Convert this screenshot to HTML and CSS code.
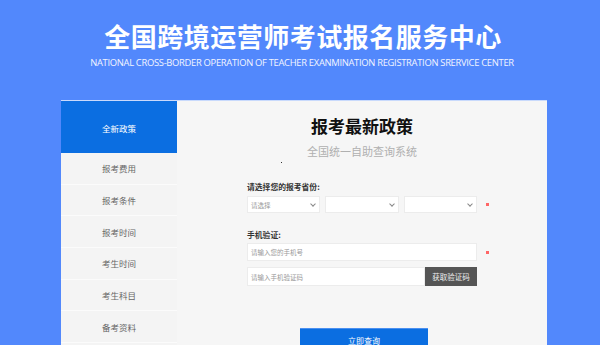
FILE: index.html
```html
<!DOCTYPE html>
<html lang="zh-CN">
<head>
<meta charset="utf-8">
<title>全国跨境运营师考试报名服务中心</title>
<link rel="stylesheet" href="styles.css">
</head>
<body>
<header class="header">
  <h1 class="title">全国跨境运营师考试报名服务中心</h1>
  <p class="subtitle">NATIONAL CROSS-BORDER OPERATION OF TEACHER EXANMINATION REGISTRATION SRERVICE CENTER</p>
</header>
<div class="panel">
  <nav class="side">
    <div class="side-item active">全新政策</div>
    <div class="side-item">报考费用</div>
    <div class="side-item">报考条件</div>
    <div class="side-item">报考时间</div>
    <div class="side-item">考生时间</div>
    <div class="side-item">考生科目</div>
    <div class="side-item">备考资料</div>
  </nav>
  <main class="main">
    <h2 class="heading">报考最新政策</h2>
    <p class="sub">全国统一自助查询系统</p>
    <div class="dot-row"><span class="dot"></span></div>
    <form class="form">
      <div class="label">请选择您的报考省份:</div>
      <div class="row">
        <div class="select"><span class="ph">请选择</span><span class="chev"></span></div>
        <div class="select"><span class="ph"></span><span class="chev"></span></div>
        <div class="select"><span class="ph"></span><span class="chev"></span></div>
        <span class="req"></span>
      </div>
      <div class="label label2">手机验证:</div>
      <div class="row">
        <div class="input wide"><span class="ph">请输入您的手机号</span></div>
        <span class="req"></span>
      </div>
      <div class="row row-code">
        <div class="input code"><span class="ph">请输入手机验证码</span></div>
        <div class="btn-code">获取验证码</div>
      </div>
      <div class="submit-row"><div class="submit">立即查询</div></div>
    </form>
  </main>
</div>
</body>
</html>
```
FILE: styles.css
```css
html, body {
  margin: 0;
  padding: 0;
}
body {
  background: #5288fc;
  width: 600px;
  height: 345px;
  overflow: hidden;
  font-family: "Noto Sans CJK SC", "Noto Sans", sans-serif;
}
.header {
  height: 100px;
  text-align: center;
  color: #fff;
  padding-top: 20px;
  box-sizing: border-box;
}
.title {
  margin: 0;
  font-size: 26px;
  line-height: 32px;
  font-weight: 700;
  letter-spacing: 0.5px;
  padding-left: 6px;
}
.subtitle {
  margin: 5px 0 0 0;
  font-family: "Open Sans", sans-serif;
  font-size: 9.4px;
  line-height: 12px;
  letter-spacing: -0.3px;
  color: #f2f5ff;
  padding-left: 4px;
}
.panel {
  margin-left: 61px;
  width: 486px;
  height: 260px;
  display: flex;
  background: #f6f6f6;
  border-top: 1px solid #c9dafc;
  box-sizing: border-box;
}
.side {
  width: 116px;
  background: #f4f4f4;
  display: flex;
  flex-direction: column;
}
.side-item {
  height: 31.7px;
  box-sizing: border-box;
  border-bottom: 1px solid #fbfbfb;
  display: flex;
  align-items: center;
  justify-content: center;
  font-size: 8.5px;
  color: #666;
  flex-shrink: 0;
}
.side-item.active {
  height: 52px;
  background: #0b6ee1;
  color: #fff;
  border-bottom: none;
  padding-top: 1px;
}
.main {
  flex: 1;
  padding-left: 70px;
  display: flex;
  flex-direction: column;
}
.heading {
  margin: 12px 0 0 0;
  padding-right: 70px;
  text-align: center;
  font-size: 17px;
  line-height: 26px;
  font-weight: 700;
  color: #111;
}
.sub {
  margin: 4px 0 0 0;
  padding-right: 70px;
  text-align: center;
  font-size: 11px;
  line-height: 16px;
  color: #b0b0b0;
}
.dot-row {
  height: 6px;
  padding-left: 34px;
}
.dot {
  display: block;
  width: 1px;
  height: 1px;
  margin-top: 3px;
  background: #333;
}
.form {
  display: flex;
  flex-direction: column;
}
.label {
  margin-top: 16px;
  font-size: 7.8px;
  line-height: 12px;
  color: #333;
  font-weight: 700;
  margin-bottom: 3px;
}
.label2 {
  margin-top: 16px;
  margin-bottom: 2px;
}
.row {
  display: flex;
  align-items: center;
  gap: 5px;
}
.select {
  width: 73.3px;
  height: 17px;
  background: #fff;
  border: 1px solid #ececec;
  box-sizing: border-box;
  display: flex;
  align-items: center;
  justify-content: space-between;
  padding: 0 4px 0 3px;
}
.ph {
  font-size: 6.5px;
  color: #999;
  line-height: 10px;
}
.chev {
  width: 3px;
  height: 3px;
  border-right: 1px solid #888;
  border-bottom: 1px solid #888;
  transform: rotate(45deg);
  margin-top: -2px;
}
.req {
  width: 3px;
  height: 3px;
  background: #f66;
  margin-left: 4px;
}
.input {
  height: 18px;
  background: #fff;
  border: 1px solid #ececec;
  box-sizing: border-box;
  display: flex;
  align-items: center;
  padding-left: 3px;
}
.wide {
  width: 230px;
}
.row-code {
  margin-top: 6px;
  gap: 0;
}
.code {
  width: 178px;
  height: 19px;
}
.btn-code {
  width: 52px;
  height: 19px;
  background: #555;
  color: #eee;
  font-size: 7.5px;
  display: flex;
  align-items: center;
  justify-content: center;
}
.submit-row {
  margin-top: 42px;
  padding-left: 53px;
}
.submit {
  width: 128px;
  height: 24px;
  background: #0b6ee1;
  color: #fff;
  font-size: 8px;
  display: flex;
  justify-content: center;
  padding-top: 6px;
  box-sizing: border-box;
  line-height: 12px;
  border-top: 1px solid #4a8ff0;
}
```
